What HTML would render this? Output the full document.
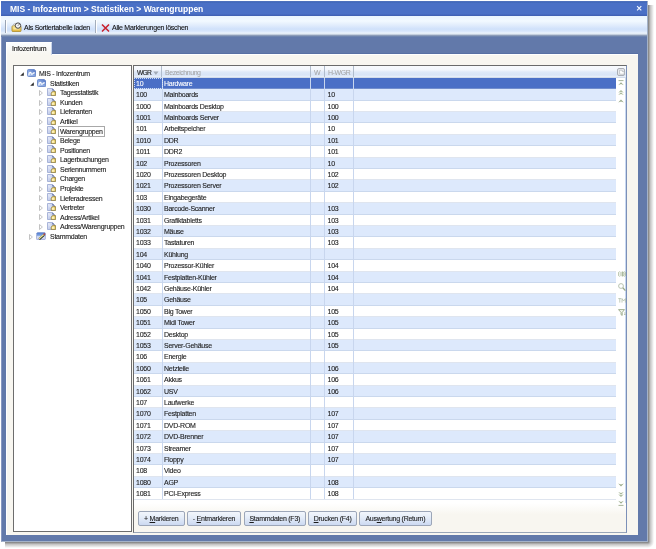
<!DOCTYPE html>
<html><head><meta charset="utf-8"><style>
*{margin:0;padding:0;box-sizing:border-box}
html,body{width:656px;height:549px;overflow:hidden;background:#fff;font-family:"Liberation Sans",sans-serif}
body{position:relative}
.a{position:absolute}
#shadow{position:absolute;left:648px;top:5px;width:6px;height:537px;background:linear-gradient(90deg,#7c7c7c,rgba(150,150,150,.55) 40%,rgba(230,230,240,0))}
#shadowb{position:absolute;left:5px;top:542px;width:643px;height:6px;background:linear-gradient(#7c7c7c,rgba(150,150,150,.55) 40%,rgba(230,230,240,0))}
#shadowc{position:absolute;left:648px;top:542px;width:6px;height:6px;background:radial-gradient(circle 6px at 0 0,#7c7c7c,rgba(150,150,150,.5) 40%,rgba(230,230,240,0) 100%)}
#win{position:absolute;left:1px;top:1px;width:647px;height:541px;background:#6279aa;border:1px solid #8898c0;border-right-color:#a4b2c8;border-bottom-color:#a4b2c8}
#title{position:absolute;left:1px;top:1px;width:646px;height:15.5px;background:linear-gradient(#5a78c0 0,#4068b8 1px,#4a70c6 2.5px,#4a70c6 12.5px,#4466bc 14px,#3a5aa8 15.5px)}
#title .t{position:absolute;left:9px;top:2.8px;font-weight:bold;font-size:8.5px;color:#fff;white-space:nowrap}
#title .x{position:absolute;left:635.2px;top:4.4px;width:6.4px;height:6.4px}
#tb{position:absolute;left:1px;top:16px;width:646px;height:21px;background:linear-gradient(#eaf5ff 0px,#f2f9ff 5px,#e2edfc 9px,#d0e1fa 13px,#d6e5fb 15px,#eaf2fc 17px,#dfe8f0 18px,#8c9cb8 19.5px,#6078a8 21px)}
.tbt{position:absolute;font-size:7px;letter-spacing:-.25px;color:#111;white-space:nowrap}
#panel{position:absolute;left:6px;top:54px;width:632px;height:481px;background:#f8f6f0;border-top:1px solid #fff;border-left:1px solid #fff}
#tab{position:absolute;left:6px;top:42px;width:46px;height:13px;background:linear-gradient(#fbfdff,#f8f6f0);border-top:1px solid #fff;border-left:1px solid #fff;border-right:1px solid #c8d4ea}
#tab span{position:absolute;left:5px;top:1.5px;font-size:7px;letter-spacing:-.25px;color:#111;white-space:nowrap}
#tree{position:absolute;left:13px;top:65px;width:119px;height:467px;background:#fff;border:1px solid #6d6d6d}
.ti{position:absolute;font-size:7px;letter-spacing:-.28px;color:#1a1a1a;white-space:nowrap;line-height:10px;height:10px}
.tsel{outline:1px solid #a8a8a8;outline-offset:-0.5px;padding:0 1px;margin-left:-1px;height:9px;margin-top:0.3px;line-height:9.4px}
.ic{position:absolute}
#grid{position:absolute;left:133px;top:65px;width:494px;height:468px;background:#f8f6f0;border:1px solid #6a6a6a;border-right-color:#7c90b8;border-bottom-color:#9aa6b8}
#hdr{position:absolute;left:134px;top:66px;width:492px;height:12px;background:linear-gradient(#f8fbfe 0px,#f2f6fc 4px,#dfe9f8 6px,#d8e4f6 9px,#e6eef9 10.5px,#c8d2e2 12px)}
.h{position:absolute;top:68.8px;font-size:7px;letter-spacing:-.45px;color:#a2a2a2;white-space:nowrap}
.hs{position:absolute;top:66px;width:1px;height:11px;background:#b0bccc}
#data{position:absolute;left:134px;top:77.9px;width:482px;height:426px;background:#fff}
.r{position:absolute;left:134px;width:482px;height:11.395px;background:#fff;font-size:7px;letter-spacing:-.25px;color:#1a1a1a;white-space:nowrap}
.r::after{content:"";position:absolute;left:0;right:0;bottom:0;height:1px;background:rgba(176,190,216,.4)}
.r.alt{background:#dde9fc}
.r.sel{background:#4a6fc6;color:#fff}
.r span{position:absolute;top:2.4px}
.c1{left:2px} .c2{left:30px} .c4{left:193.5px}
.vs{position:absolute;top:77.9px;width:1px;height:421.3px;background:#c8d6ee}
#nav{position:absolute;left:616px;top:77.9px;width:10px;height:425px;background:#fff;border-right:1px solid #c8d8f0}
#foot{position:absolute;left:134px;top:503px;width:492px;height:29px;background:linear-gradient(#fff,#f8f6f0 40%)}
.btn{position:absolute;top:511.3px;height:14.6px;background:linear-gradient(#f2f6fc,#e4ecf8 45%,#ccd9f1);border:1px solid #9ca6b8;border-radius:2px;font-size:7px;letter-spacing:-.25px;color:#1a1a1a;white-space:nowrap;text-align:center;line-height:14.6px}
.btn u{text-decoration:underline}
.nv{position:absolute;left:617.5px}
.ti,.r,.tbt,#tab span,.btn{-webkit-text-stroke:0.1px currentColor}
.ti,.r,.tbt,#tab span,.btn,.h,#title .t{will-change:transform}

</style></head><body>
<svg width="0" height="0" style="position:absolute"><defs>
<linearGradient id="gdb" x1="0" y1="0" x2="0" y2="1"><stop offset="0" stop-color="#d8e6f8"/><stop offset="1" stop-color="#6c98dc"/></linearGradient>
<linearGradient id="gpg" x1="0" y1="0" x2="1" y2="1"><stop offset="0" stop-color="#e8ecfa"/><stop offset="1" stop-color="#aab8e0"/></linearGradient>
<linearGradient id="gfo" x1="0" y1="0" x2="0" y2="1"><stop offset="0" stop-color="#fff4b0"/><stop offset="1" stop-color="#e0b030"/></linearGradient>
<radialGradient id="gfo2" cx="0.4" cy="0.6" r="0.7"><stop offset="0" stop-color="#fffce0"/><stop offset="0.5" stop-color="#f4dc80"/><stop offset="1" stop-color="#b89830"/></radialGradient>
<linearGradient id="gdb2" x1="1" y1="0" x2="0" y2="1"><stop offset="0" stop-color="#4a6cc0"/><stop offset="0.55" stop-color="#8aa8e0"/><stop offset="1" stop-color="#c8d8f4"/></linearGradient>
<linearGradient id="gst" x1="0" y1="0" x2="0" y2="1"><stop offset="0" stop-color="#4a78d0"/><stop offset="0.4" stop-color="#7aa0e0"/><stop offset="0.6" stop-color="#dde4f6"/><stop offset="1" stop-color="#c8c8ec"/></linearGradient>
</defs></svg>
<div id="shadow"></div><div id="shadowb"></div><div id="shadowc"></div>
<div id="win"></div>
<div id="title"><span class="t">MIS - Infozentrum &gt; Statistiken &gt; Warengruppen</span>
<svg class="x" viewBox="0 0 7 7"><path d="M1.2 1.2L5.8 5.8M5.8 1.2L1.2 5.8" stroke="#f4f8ff" stroke-width="1.3"/></svg></div>
<div id="tb"></div>
<div class="a" style="left:5px;top:19.5px;width:1px;height:13px;background:#9aa4b4"></div><div class="a" style="left:6px;top:19.5px;width:1px;height:13px;background:#ffffff"></div>
<div class="a" style="left:95px;top:19.5px;width:1px;height:13px;background:#a4aebc"></div><div class="a" style="left:96px;top:19.5px;width:1px;height:13px;background:#ffffff"></div>
<svg class="a" style="left:11px;top:21.5px" width="11" height="10" viewBox="0 0 11 10"><path d="M1 4.8Q1 3.8 2 3.8H9Q10 3.8 10 4.8V8.6Q10 9.6 9 9.6H2Q1 9.6 1 8.6Z" fill="url(#gfo)" stroke="#b09030" stroke-width="0.9"/><path d="M2.5 6.8H8.5" stroke="#fff6c0" stroke-width="0.8"/><path d="M1.8 3.8Q2.4 1.6 4.4 1.6H6" fill="#f0f0f0" stroke="#a0a0a0" stroke-width="0.7"/><circle cx="7" cy="3.6" r="2.7" fill="#f6f6f6" stroke="#4a4a4a" stroke-width="1"/><path d="M7 3.6L8.4 2.2" stroke="#4a4a4a" stroke-width="0.9"/></svg>
<div class="tbt" style="left:24px;top:24px">Als Sortiertabelle laden</div>
<svg class="a" style="left:101px;top:23.5px" width="9" height="8" viewBox="0 0 9 8"><path d="M1 0.5L8 7.5M8 0.5L1 7.5" stroke="#c8202c" stroke-width="1.5"/></svg>
<div class="tbt" style="left:112.4px;top:24px">Alle Markierungen löschen</div>
<div id="panel"></div>
<div id="tabline" class="a" style="left:51px;top:53px;width:587px;height:1px;background:#5870a4"></div>
<div id="tab"><span>Infozentrum</span></div>
<div id="tree"></div>
<div class="ti" style="top:69.10px;left:39.0px">MIS - Infozentrum</div>
<svg class="ic" style="left:19.60px;top:72.20px" width="4" height="4" viewBox="0 0 4 4"><path d="M3.8 0.2V3.8H0.2Z" fill="#2a2a2a"/></svg>
<svg class="ic" style="left:26.60px;top:69.20px" width="9.5" height="8" viewBox="0 0 9.5 8"><path d="M1.5 0.5H7.2L9 2.2V6.4Q9 7.5 7.9 7.5H1.5Q0.5 7.5 0.5 6.4V1.6Q0.5 0.5 1.5 0.5Z" fill="url(#gdb2)" stroke="#6a88c8" stroke-width="0.9"/><path d="M2 6Q1.8 3.6 3.2 3.4Q4.2 3.4 4.2 4.6Q4.4 5.8 5.6 4.8Q6.6 3.6 7.8 4" stroke="#fff" stroke-width="1.1" fill="none"/></svg>
<div class="ti" style="top:78.67px;left:49.7px">Statistiken</div>
<svg class="ic" style="left:29.60px;top:82.17px" width="4" height="4" viewBox="0 0 4 4"><path d="M3.8 0.2V3.8H0.2Z" fill="#2a2a2a"/></svg>
<svg class="ic" style="left:36.60px;top:78.67px" width="9.5" height="8" viewBox="0 0 9.5 8"><path d="M1.5 0.5H7.2L9 2.2V6.4Q9 7.5 7.9 7.5H1.5Q0.5 7.5 0.5 6.4V1.6Q0.5 0.5 1.5 0.5Z" fill="url(#gdb2)" stroke="#6a88c8" stroke-width="0.9"/><path d="M2 6Q1.8 3.6 3.2 3.4Q4.2 3.4 4.2 4.6Q4.4 5.8 5.6 4.8Q6.6 3.6 7.8 4" stroke="#fff" stroke-width="1.1" fill="none"/></svg>
<div class="ti" style="top:88.24px;left:59.8px">Tagesstatistik</div>
<svg class="ic" style="left:39.40px;top:89.94px" width="4" height="6" viewBox="0 0 4 6"><path d="M0.5 0.5L3.4 3L0.5 5.5Z" fill="#fff" stroke="#b4b4b4" stroke-width="0.8"/></svg>
<svg class="ic" style="left:47.20px;top:87.94px" width="9" height="8" viewBox="0 0 9 8"><path d="M0.5 0.5H5.4L7.4 2.4V7.5H0.5Z" fill="url(#gpg)" stroke="#98a6d0" stroke-width="0.8"/><path d="M5.2 0.4L7.6 2.6L5.4 2.6Z" fill="#5a6aa0"/><path d="M1.6 2.2L4.2 4.6" stroke="#fff" stroke-width="0.6" opacity=".8"/><path d="M4.6 4.4Q6.4 2.4 8.6 3.6V7.6H4.4Q3.8 5.8 4.6 4.4Z" fill="url(#gfo2)" stroke="#8a7838" stroke-width="0.7"/></svg>
<div class="ti" style="top:97.81px;left:59.8px">Kunden</div>
<svg class="ic" style="left:39.40px;top:99.51px" width="4" height="6" viewBox="0 0 4 6"><path d="M0.5 0.5L3.4 3L0.5 5.5Z" fill="#fff" stroke="#b4b4b4" stroke-width="0.8"/></svg>
<svg class="ic" style="left:47.20px;top:97.51px" width="9" height="8" viewBox="0 0 9 8"><path d="M0.5 0.5H5.4L7.4 2.4V7.5H0.5Z" fill="url(#gpg)" stroke="#98a6d0" stroke-width="0.8"/><path d="M5.2 0.4L7.6 2.6L5.4 2.6Z" fill="#5a6aa0"/><path d="M1.6 2.2L4.2 4.6" stroke="#fff" stroke-width="0.6" opacity=".8"/><path d="M4.6 4.4Q6.4 2.4 8.6 3.6V7.6H4.4Q3.8 5.8 4.6 4.4Z" fill="url(#gfo2)" stroke="#8a7838" stroke-width="0.7"/></svg>
<div class="ti" style="top:107.38px;left:59.8px">Lieferanten</div>
<svg class="ic" style="left:39.40px;top:109.08px" width="4" height="6" viewBox="0 0 4 6"><path d="M0.5 0.5L3.4 3L0.5 5.5Z" fill="#fff" stroke="#b4b4b4" stroke-width="0.8"/></svg>
<svg class="ic" style="left:47.20px;top:107.08px" width="9" height="8" viewBox="0 0 9 8"><path d="M0.5 0.5H5.4L7.4 2.4V7.5H0.5Z" fill="url(#gpg)" stroke="#98a6d0" stroke-width="0.8"/><path d="M5.2 0.4L7.6 2.6L5.4 2.6Z" fill="#5a6aa0"/><path d="M1.6 2.2L4.2 4.6" stroke="#fff" stroke-width="0.6" opacity=".8"/><path d="M4.6 4.4Q6.4 2.4 8.6 3.6V7.6H4.4Q3.8 5.8 4.6 4.4Z" fill="url(#gfo2)" stroke="#8a7838" stroke-width="0.7"/></svg>
<div class="ti" style="top:116.95px;left:59.8px">Artikel</div>
<svg class="ic" style="left:39.40px;top:118.65px" width="4" height="6" viewBox="0 0 4 6"><path d="M0.5 0.5L3.4 3L0.5 5.5Z" fill="#fff" stroke="#b4b4b4" stroke-width="0.8"/></svg>
<svg class="ic" style="left:47.20px;top:116.65px" width="9" height="8" viewBox="0 0 9 8"><path d="M0.5 0.5H5.4L7.4 2.4V7.5H0.5Z" fill="url(#gpg)" stroke="#98a6d0" stroke-width="0.8"/><path d="M5.2 0.4L7.6 2.6L5.4 2.6Z" fill="#5a6aa0"/><path d="M1.6 2.2L4.2 4.6" stroke="#fff" stroke-width="0.6" opacity=".8"/><path d="M4.6 4.4Q6.4 2.4 8.6 3.6V7.6H4.4Q3.8 5.8 4.6 4.4Z" fill="url(#gfo2)" stroke="#8a7838" stroke-width="0.7"/></svg>
<div class="ti tsel" style="top:126.52px;left:59.8px">Warengruppen</div>
<svg class="ic" style="left:39.40px;top:128.22px" width="4" height="6" viewBox="0 0 4 6"><path d="M0.5 0.5L3.4 3L0.5 5.5Z" fill="#fff" stroke="#b4b4b4" stroke-width="0.8"/></svg>
<svg class="ic" style="left:47.20px;top:126.22px" width="9" height="8" viewBox="0 0 9 8"><path d="M0.5 0.5H5.4L7.4 2.4V7.5H0.5Z" fill="url(#gpg)" stroke="#98a6d0" stroke-width="0.8"/><path d="M5.2 0.4L7.6 2.6L5.4 2.6Z" fill="#5a6aa0"/><path d="M1.6 2.2L4.2 4.6" stroke="#fff" stroke-width="0.6" opacity=".8"/><path d="M4.6 4.4Q6.4 2.4 8.6 3.6V7.6H4.4Q3.8 5.8 4.6 4.4Z" fill="url(#gfo2)" stroke="#8a7838" stroke-width="0.7"/></svg>
<div class="ti" style="top:136.09px;left:59.8px">Belege</div>
<svg class="ic" style="left:39.40px;top:137.79px" width="4" height="6" viewBox="0 0 4 6"><path d="M0.5 0.5L3.4 3L0.5 5.5Z" fill="#fff" stroke="#b4b4b4" stroke-width="0.8"/></svg>
<svg class="ic" style="left:47.20px;top:135.79px" width="9" height="8" viewBox="0 0 9 8"><path d="M0.5 0.5H5.4L7.4 2.4V7.5H0.5Z" fill="url(#gpg)" stroke="#98a6d0" stroke-width="0.8"/><path d="M5.2 0.4L7.6 2.6L5.4 2.6Z" fill="#5a6aa0"/><path d="M1.6 2.2L4.2 4.6" stroke="#fff" stroke-width="0.6" opacity=".8"/><path d="M4.6 4.4Q6.4 2.4 8.6 3.6V7.6H4.4Q3.8 5.8 4.6 4.4Z" fill="url(#gfo2)" stroke="#8a7838" stroke-width="0.7"/></svg>
<div class="ti" style="top:145.66px;left:59.8px">Positionen</div>
<svg class="ic" style="left:39.40px;top:147.36px" width="4" height="6" viewBox="0 0 4 6"><path d="M0.5 0.5L3.4 3L0.5 5.5Z" fill="#fff" stroke="#b4b4b4" stroke-width="0.8"/></svg>
<svg class="ic" style="left:47.20px;top:145.36px" width="9" height="8" viewBox="0 0 9 8"><path d="M0.5 0.5H5.4L7.4 2.4V7.5H0.5Z" fill="url(#gpg)" stroke="#98a6d0" stroke-width="0.8"/><path d="M5.2 0.4L7.6 2.6L5.4 2.6Z" fill="#5a6aa0"/><path d="M1.6 2.2L4.2 4.6" stroke="#fff" stroke-width="0.6" opacity=".8"/><path d="M4.6 4.4Q6.4 2.4 8.6 3.6V7.6H4.4Q3.8 5.8 4.6 4.4Z" fill="url(#gfo2)" stroke="#8a7838" stroke-width="0.7"/></svg>
<div class="ti" style="top:155.23px;left:59.8px">Lagerbuchungen</div>
<svg class="ic" style="left:39.40px;top:156.93px" width="4" height="6" viewBox="0 0 4 6"><path d="M0.5 0.5L3.4 3L0.5 5.5Z" fill="#fff" stroke="#b4b4b4" stroke-width="0.8"/></svg>
<svg class="ic" style="left:47.20px;top:154.93px" width="9" height="8" viewBox="0 0 9 8"><path d="M0.5 0.5H5.4L7.4 2.4V7.5H0.5Z" fill="url(#gpg)" stroke="#98a6d0" stroke-width="0.8"/><path d="M5.2 0.4L7.6 2.6L5.4 2.6Z" fill="#5a6aa0"/><path d="M1.6 2.2L4.2 4.6" stroke="#fff" stroke-width="0.6" opacity=".8"/><path d="M4.6 4.4Q6.4 2.4 8.6 3.6V7.6H4.4Q3.8 5.8 4.6 4.4Z" fill="url(#gfo2)" stroke="#8a7838" stroke-width="0.7"/></svg>
<div class="ti" style="top:164.80px;left:59.8px">Seriennummern</div>
<svg class="ic" style="left:39.40px;top:166.50px" width="4" height="6" viewBox="0 0 4 6"><path d="M0.5 0.5L3.4 3L0.5 5.5Z" fill="#fff" stroke="#b4b4b4" stroke-width="0.8"/></svg>
<svg class="ic" style="left:47.20px;top:164.50px" width="9" height="8" viewBox="0 0 9 8"><path d="M0.5 0.5H5.4L7.4 2.4V7.5H0.5Z" fill="url(#gpg)" stroke="#98a6d0" stroke-width="0.8"/><path d="M5.2 0.4L7.6 2.6L5.4 2.6Z" fill="#5a6aa0"/><path d="M1.6 2.2L4.2 4.6" stroke="#fff" stroke-width="0.6" opacity=".8"/><path d="M4.6 4.4Q6.4 2.4 8.6 3.6V7.6H4.4Q3.8 5.8 4.6 4.4Z" fill="url(#gfo2)" stroke="#8a7838" stroke-width="0.7"/></svg>
<div class="ti" style="top:174.37px;left:59.8px">Chargen</div>
<svg class="ic" style="left:39.40px;top:176.07px" width="4" height="6" viewBox="0 0 4 6"><path d="M0.5 0.5L3.4 3L0.5 5.5Z" fill="#fff" stroke="#b4b4b4" stroke-width="0.8"/></svg>
<svg class="ic" style="left:47.20px;top:174.07px" width="9" height="8" viewBox="0 0 9 8"><path d="M0.5 0.5H5.4L7.4 2.4V7.5H0.5Z" fill="url(#gpg)" stroke="#98a6d0" stroke-width="0.8"/><path d="M5.2 0.4L7.6 2.6L5.4 2.6Z" fill="#5a6aa0"/><path d="M1.6 2.2L4.2 4.6" stroke="#fff" stroke-width="0.6" opacity=".8"/><path d="M4.6 4.4Q6.4 2.4 8.6 3.6V7.6H4.4Q3.8 5.8 4.6 4.4Z" fill="url(#gfo2)" stroke="#8a7838" stroke-width="0.7"/></svg>
<div class="ti" style="top:183.94px;left:59.8px">Projekte</div>
<svg class="ic" style="left:39.40px;top:185.64px" width="4" height="6" viewBox="0 0 4 6"><path d="M0.5 0.5L3.4 3L0.5 5.5Z" fill="#fff" stroke="#b4b4b4" stroke-width="0.8"/></svg>
<svg class="ic" style="left:47.20px;top:183.64px" width="9" height="8" viewBox="0 0 9 8"><path d="M0.5 0.5H5.4L7.4 2.4V7.5H0.5Z" fill="url(#gpg)" stroke="#98a6d0" stroke-width="0.8"/><path d="M5.2 0.4L7.6 2.6L5.4 2.6Z" fill="#5a6aa0"/><path d="M1.6 2.2L4.2 4.6" stroke="#fff" stroke-width="0.6" opacity=".8"/><path d="M4.6 4.4Q6.4 2.4 8.6 3.6V7.6H4.4Q3.8 5.8 4.6 4.4Z" fill="url(#gfo2)" stroke="#8a7838" stroke-width="0.7"/></svg>
<div class="ti" style="top:193.51px;left:59.8px">Lieferadressen</div>
<svg class="ic" style="left:39.40px;top:195.21px" width="4" height="6" viewBox="0 0 4 6"><path d="M0.5 0.5L3.4 3L0.5 5.5Z" fill="#fff" stroke="#b4b4b4" stroke-width="0.8"/></svg>
<svg class="ic" style="left:47.20px;top:193.21px" width="9" height="8" viewBox="0 0 9 8"><path d="M0.5 0.5H5.4L7.4 2.4V7.5H0.5Z" fill="url(#gpg)" stroke="#98a6d0" stroke-width="0.8"/><path d="M5.2 0.4L7.6 2.6L5.4 2.6Z" fill="#5a6aa0"/><path d="M1.6 2.2L4.2 4.6" stroke="#fff" stroke-width="0.6" opacity=".8"/><path d="M4.6 4.4Q6.4 2.4 8.6 3.6V7.6H4.4Q3.8 5.8 4.6 4.4Z" fill="url(#gfo2)" stroke="#8a7838" stroke-width="0.7"/></svg>
<div class="ti" style="top:203.08px;left:59.8px">Vertreter</div>
<svg class="ic" style="left:39.40px;top:204.78px" width="4" height="6" viewBox="0 0 4 6"><path d="M0.5 0.5L3.4 3L0.5 5.5Z" fill="#fff" stroke="#b4b4b4" stroke-width="0.8"/></svg>
<svg class="ic" style="left:47.20px;top:202.78px" width="9" height="8" viewBox="0 0 9 8"><path d="M0.5 0.5H5.4L7.4 2.4V7.5H0.5Z" fill="url(#gpg)" stroke="#98a6d0" stroke-width="0.8"/><path d="M5.2 0.4L7.6 2.6L5.4 2.6Z" fill="#5a6aa0"/><path d="M1.6 2.2L4.2 4.6" stroke="#fff" stroke-width="0.6" opacity=".8"/><path d="M4.6 4.4Q6.4 2.4 8.6 3.6V7.6H4.4Q3.8 5.8 4.6 4.4Z" fill="url(#gfo2)" stroke="#8a7838" stroke-width="0.7"/></svg>
<div class="ti" style="top:212.65px;left:59.8px">Adress/Artikel</div>
<svg class="ic" style="left:39.40px;top:214.35px" width="4" height="6" viewBox="0 0 4 6"><path d="M0.5 0.5L3.4 3L0.5 5.5Z" fill="#fff" stroke="#b4b4b4" stroke-width="0.8"/></svg>
<svg class="ic" style="left:47.20px;top:212.35px" width="9" height="8" viewBox="0 0 9 8"><path d="M0.5 0.5H5.4L7.4 2.4V7.5H0.5Z" fill="url(#gpg)" stroke="#98a6d0" stroke-width="0.8"/><path d="M5.2 0.4L7.6 2.6L5.4 2.6Z" fill="#5a6aa0"/><path d="M1.6 2.2L4.2 4.6" stroke="#fff" stroke-width="0.6" opacity=".8"/><path d="M4.6 4.4Q6.4 2.4 8.6 3.6V7.6H4.4Q3.8 5.8 4.6 4.4Z" fill="url(#gfo2)" stroke="#8a7838" stroke-width="0.7"/></svg>
<div class="ti" style="top:222.22px;left:59.8px">Adress/Warengruppen</div>
<svg class="ic" style="left:39.40px;top:223.92px" width="4" height="6" viewBox="0 0 4 6"><path d="M0.5 0.5L3.4 3L0.5 5.5Z" fill="#fff" stroke="#b4b4b4" stroke-width="0.8"/></svg>
<svg class="ic" style="left:47.20px;top:221.92px" width="9" height="8" viewBox="0 0 9 8"><path d="M0.5 0.5H5.4L7.4 2.4V7.5H0.5Z" fill="url(#gpg)" stroke="#98a6d0" stroke-width="0.8"/><path d="M5.2 0.4L7.6 2.6L5.4 2.6Z" fill="#5a6aa0"/><path d="M1.6 2.2L4.2 4.6" stroke="#fff" stroke-width="0.6" opacity=".8"/><path d="M4.6 4.4Q6.4 2.4 8.6 3.6V7.6H4.4Q3.8 5.8 4.6 4.4Z" fill="url(#gfo2)" stroke="#8a7838" stroke-width="0.7"/></svg>
<div class="ti" style="top:231.79px;left:49.7px">Stammdaten</div>
<svg class="ic" style="left:29.20px;top:233.59px" width="4" height="6" viewBox="0 0 4 6"><path d="M0.5 0.5L3.4 3L0.5 5.5Z" fill="#fff" stroke="#b4b4b4" stroke-width="0.8"/></svg>
<svg class="ic" style="left:36.40px;top:231.89px" width="10" height="8" viewBox="0 0 10 8"><path d="M0.8 1.2Q1.2 0.4 2 0.4H8.2Q9.2 0.4 9.4 1.4V6.6Q9.4 7.6 8.4 7.6H1.4Q0.4 7.6 0.4 6.6Z" fill="url(#gst)" stroke="#8090c8" stroke-width="0.6"/><path d="M3.2 7.2L8 3" stroke="#203020" stroke-width="2.2"/><path d="M3 6.8L7.8 2.6" stroke="#f0e090" stroke-width="1.3"/><path d="M7.6 2.8L9 1.6" stroke="#b04848" stroke-width="1.8"/></svg>
<div id="grid"></div>
<div id="hdr"></div>
<div class="h" style="left:136.8px;color:#222;letter-spacing:-.75px;font-size:6.7px;top:69px;-webkit-text-stroke:0.12px #222">WGR</div>
<svg class="a" style="left:153px;top:70.5px" width="6" height="5" viewBox="0 0 6 5"><path d="M0.3 0.5H5.5L2.9 4Z" fill="#a4acb8"/></svg>
<div class="hs" style="left:161.4px"></div>
<div class="h" style="left:165px">Bezeichnung</div>
<div class="hs" style="left:310.4px"></div>
<div class="h" style="left:314px">W</div>
<div class="hs" style="left:324.4px"></div>
<div class="h" style="left:327.5px">H-WGR</div>
<div class="hs" style="left:353.4px"></div>
<div id="data"></div>
<div class="r sel" style="top:78px;height:11px"><span class="c1">10</span><span class="c2">Hardware</span><span class="c4"></span></div>
<div class="r alt" style="top:89px;height:12px"><span class="c1">100</span><span class="c2">Mainboards</span><span class="c4">10</span></div>
<div class="r" style="top:101px;height:11px"><span class="c1">1000</span><span class="c2">Mainboards Desktop</span><span class="c4">100</span></div>
<div class="r alt" style="top:112px;height:11px"><span class="c1">1001</span><span class="c2">Mainboards Server</span><span class="c4">100</span></div>
<div class="r" style="top:123px;height:12px"><span class="c1">101</span><span class="c2">Arbeitspeicher</span><span class="c4">10</span></div>
<div class="r alt" style="top:135px;height:11px"><span class="c1">1010</span><span class="c2">DDR</span><span class="c4">101</span></div>
<div class="r" style="top:146px;height:12px"><span class="c1">1011</span><span class="c2">DDR2</span><span class="c4">101</span></div>
<div class="r alt" style="top:158px;height:11px"><span class="c1">102</span><span class="c2">Prozessoren</span><span class="c4">10</span></div>
<div class="r" style="top:169px;height:11px"><span class="c1">1020</span><span class="c2">Prozessoren Desktop</span><span class="c4">102</span></div>
<div class="r alt" style="top:180px;height:12px"><span class="c1">1021</span><span class="c2">Prozessoren Server</span><span class="c4">102</span></div>
<div class="r" style="top:192px;height:11px"><span class="c1">103</span><span class="c2">Eingabegeräte</span><span class="c4"></span></div>
<div class="r alt" style="top:203px;height:12px"><span class="c1">1030</span><span class="c2">Barcode-Scanner</span><span class="c4">103</span></div>
<div class="r" style="top:215px;height:11px"><span class="c1">1031</span><span class="c2">Grafiktabletts</span><span class="c4">103</span></div>
<div class="r alt" style="top:226px;height:11px"><span class="c1">1032</span><span class="c2">Mäuse</span><span class="c4">103</span></div>
<div class="r" style="top:237px;height:12px"><span class="c1">1033</span><span class="c2">Tastaturen</span><span class="c4">103</span></div>
<div class="r alt" style="top:249px;height:11px"><span class="c1">104</span><span class="c2">Kühlung</span><span class="c4"></span></div>
<div class="r" style="top:260px;height:12px"><span class="c1">1040</span><span class="c2">Prozessor-Kühler</span><span class="c4">104</span></div>
<div class="r alt" style="top:272px;height:11px"><span class="c1">1041</span><span class="c2">Festplatten-Kühler</span><span class="c4">104</span></div>
<div class="r" style="top:283px;height:11px"><span class="c1">1042</span><span class="c2">Gehäuse-Kühler</span><span class="c4">104</span></div>
<div class="r alt" style="top:294px;height:12px"><span class="c1">105</span><span class="c2">Gehäuse</span><span class="c4"></span></div>
<div class="r" style="top:306px;height:11px"><span class="c1">1050</span><span class="c2">Big Tower</span><span class="c4">105</span></div>
<div class="r alt" style="top:317px;height:12px"><span class="c1">1051</span><span class="c2">Midi Tower</span><span class="c4">105</span></div>
<div class="r" style="top:329px;height:11px"><span class="c1">1052</span><span class="c2">Desktop</span><span class="c4">105</span></div>
<div class="r alt" style="top:340px;height:11px"><span class="c1">1053</span><span class="c2">Server-Gehäuse</span><span class="c4">105</span></div>
<div class="r" style="top:351px;height:12px"><span class="c1">106</span><span class="c2">Energie</span><span class="c4"></span></div>
<div class="r alt" style="top:363px;height:11px"><span class="c1">1060</span><span class="c2">Netzteile</span><span class="c4">106</span></div>
<div class="r" style="top:374px;height:12px"><span class="c1">1061</span><span class="c2">Akkus</span><span class="c4">106</span></div>
<div class="r alt" style="top:386px;height:11px"><span class="c1">1062</span><span class="c2">USV</span><span class="c4">106</span></div>
<div class="r" style="top:397px;height:11px"><span class="c1">107</span><span class="c2">Laufwerke</span><span class="c4"></span></div>
<div class="r alt" style="top:408px;height:12px"><span class="c1">1070</span><span class="c2">Festplatten</span><span class="c4">107</span></div>
<div class="r" style="top:420px;height:11px"><span class="c1">1071</span><span class="c2">DVD-ROM</span><span class="c4">107</span></div>
<div class="r alt" style="top:431px;height:12px"><span class="c1">1072</span><span class="c2">DVD-Brenner</span><span class="c4">107</span></div>
<div class="r" style="top:443px;height:11px"><span class="c1">1073</span><span class="c2">Streamer</span><span class="c4">107</span></div>
<div class="r alt" style="top:454px;height:11px"><span class="c1">1074</span><span class="c2">Floppy</span><span class="c4">107</span></div>
<div class="r" style="top:465px;height:12px"><span class="c1">108</span><span class="c2">Video</span><span class="c4"></span></div>
<div class="r alt" style="top:477px;height:11px"><span class="c1">1080</span><span class="c2">AGP</span><span class="c4">108</span></div>
<div class="r" style="top:488px;height:12px"><span class="c1">1081</span><span class="c2">PCI-Express</span><span class="c4">108</span></div>
<div class="vs" style="left:162.4px"></div>
<div class="vs" style="left:310.4px"></div>
<div class="vs" style="left:324.4px"></div>
<div class="vs" style="left:353.4px"></div>
<div id="foot"></div>
<div id="nav"></div>
<svg class="a" style="left:617px;top:68.2px" width="8" height="8" viewBox="0 0 8 8"><rect x="0.5" y="0.5" width="7" height="7" rx="1.5" fill="#e8eaee" stroke="#9a9ea6" stroke-width="0.8"/><path d="M2.6 2.2H5.2V3.6H7.2V6.2H2.6Z" fill="#fff" stroke="#a8acb4" stroke-width="0.6"/></svg>
<svg class="nv" style="left:618.2px;top:79.8px" width="6" height="6" viewBox="0 0 6 6"><path d="M0.5 0.6H5.5" stroke="#9cac8c" stroke-width="0.9"/><path d="M0.2 5.2L3 2.2L5.8 5.2L3 4Z" fill="#9cac8c"/></svg>
<svg class="nv" style="left:618.2px;top:89.8px" width="6" height="5" viewBox="0 0 6 5"><path d="M0.2 2.8L3 0L5.8 2.8L3 1.8Z M0.2 5L3 2.2L5.8 5L3 4Z" fill="#a8b898"/></svg>
<svg class="nv" style="left:618.2px;top:98.8px" width="6" height="4" viewBox="0 0 6 4"><path d="M0.2 3.6L3 0.6L5.8 3.6L3 2.4Z" fill="#9cac8c"/></svg>
<svg class="nv" style="left:617.6px;top:270.8px" width="8" height="6" viewBox="0 0 8 6"><path d="M1.5 0.5Q0.5 0.5 0.7 3Q0.5 5.5 1.5 5.5M6.5 0.5Q7.5 0.5 7.3 3Q7.5 5.5 6.5 5.5M3 0.8V5.2M4.5 0.8Q6 0.8 6 3Q6 5.2 4.5 5.2Z" stroke="#a4b494" stroke-width="0.9" fill="none"/></svg>
<svg class="nv" style="left:617.6px;top:283px" width="8" height="9" viewBox="0 0 8 9"><circle cx="3" cy="3" r="2.4" fill="#fff" stroke="#b0bca8" stroke-width="0.9"/><path d="M4.8 4.8L7.4 7.6" stroke="#98a888" stroke-width="1.3"/></svg>
<svg class="nv" style="left:617.6px;top:297.8px" width="8" height="5" viewBox="0 0 8 5"><path d="M0.3 0.6H3.3M1.8 0.6V4.6M4 4.6V0.6L5.6 3L7.4 0.6V4.6" stroke="#b0bca8" stroke-width="0.8" fill="none"/></svg>
<svg class="nv" style="left:617.6px;top:309.2px" width="8" height="7" viewBox="0 0 8 7"><path d="M0.5 0.6H6.5L4.2 3.4V6.4L3 5.6V3.4Z" stroke="#98a888" stroke-width="0.9" fill="#f4f8f0"/><path d="M6 4H7.6M6 5.5H7.6" stroke="#a8b898" stroke-width="0.8"/></svg>
<svg class="nv" style="left:618.2px;top:483px" width="6" height="4" viewBox="0 0 6 4"><path d="M0.2 0.4L3 3.4L5.8 0.4L3 1.6Z" fill="#9cac8c"/></svg>
<svg class="nv" style="left:618.2px;top:491.6px" width="6" height="5" viewBox="0 0 6 5"><path d="M0.2 0L3 2.8L5.8 0L3 1Z M0.2 2.2L3 5L5.8 2.2L3 3.2Z" fill="#a8b898"/></svg>
<svg class="nv" style="left:618.2px;top:500.2px" width="6" height="6" viewBox="0 0 6 6"><path d="M0.2 0.8L3 3.8L5.8 0.8L3 2Z" fill="#9cac8c"/><path d="M0.5 5.4H5.5" stroke="#9cac8c" stroke-width="0.9"/></svg>
<div class="a" style="left:134px;top:78px;width:28.5px;height:10.6px;border:1px dotted rgba(225,238,255,.85)"></div>
<div class="btn" style="left:138px;width:46.5px">+ <u>M</u>arkieren</div>
<div class="btn" style="left:187px;width:54px">- <u>E</u>ntmarkieren</div>
<div class="btn" style="left:243.5px;width:61.5px"><u>S</u>tammdaten (F3)</div>
<div class="btn" style="left:307.8px;width:49.2px"><u>D</u>rucken (F4)</div>
<div class="btn" style="left:359.3px;width:72.7px">Aus<u>w</u>ertung (Return)</div>

</body></html>
